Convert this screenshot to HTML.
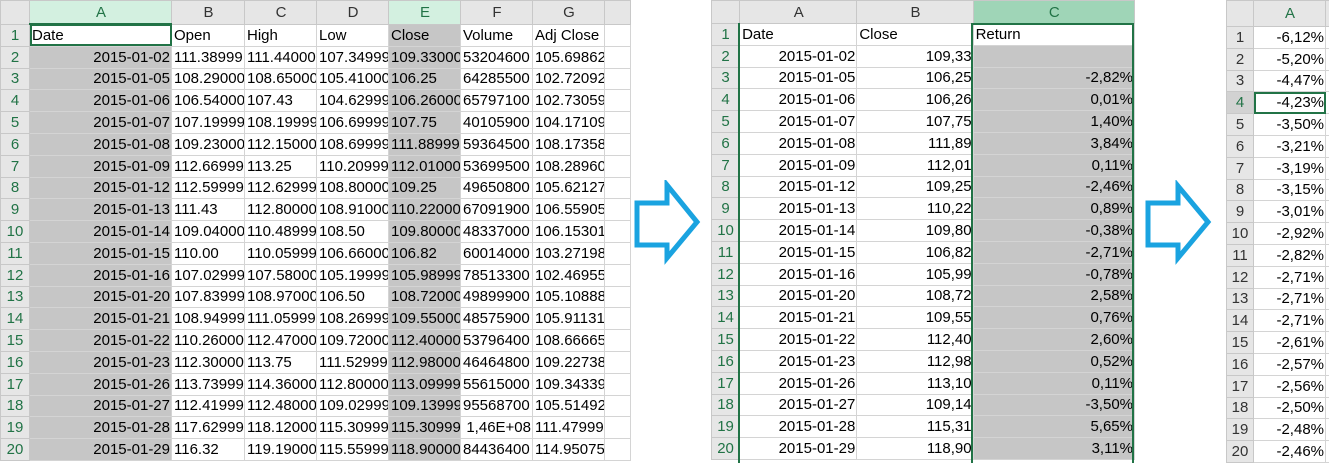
<!DOCTYPE html><html><head><style>
body{margin:0;width:1329px;height:463px;overflow:hidden;background:#fff;font-family:"Liberation Sans",sans-serif;font-size:15px;color:#000;position:relative}
.s{position:absolute;top:0;border-collapse:collapse;table-layout:fixed}
.s td{height:20.8px;border:1px solid #d4d4d4;padding:0 1px 0 2px;white-space:nowrap;overflow:hidden;line-height:19px}
.s tr.h td{height:22px;background:#e6e6e6;color:#333;text-align:center;border-color:#c8c8c8}
.s td.r{background:#e6e6e6;color:#217346;text-align:center;border-color:#c8c8c8;padding:0}
.g{background:#c6c6c6}
.R{text-align:right}
svg{position:absolute}
</style></head><body>
<table class="s" style="left:0;width:630px">
<colgroup><col style="width:29px"><col style="width:142px"><col style="width:73px"><col style="width:72px"><col style="width:72px"><col style="width:72px"><col style="width:72px"><col style="width:72px"><col style="width:26px"></colgroup>
<tr class="h"><td style="background:#e6e6e6"></td><td style="background:#d3f0e0;color:#217346;border-bottom:2px solid #217346">A</td><td>B</td><td>C</td><td>D</td><td style="background:#d3f0e0;color:#217346">E</td><td>F</td><td>G</td><td></td></tr>
<tr><td class="r">1</td><td style="outline:2px solid #217346;outline-offset:-2px">Date</td><td>Open</td><td>High</td><td>Low</td><td class="g">Close</td><td>Volume</td><td>Adj Close</td><td></td></tr>
<tr><td class="r">2</td><td class="g R">2015-01-02</td><td>111.38999</td><td>111.44000</td><td>107.34999</td><td class="g">109.33000</td><td>53204600</td><td>105.69862</td><td></td></tr>
<tr><td class="r">3</td><td class="g R">2015-01-05</td><td>108.29000</td><td>108.65000</td><td>105.41000</td><td class="g">106.25</td><td>64285500</td><td>102.72092</td><td></td></tr>
<tr><td class="r">4</td><td class="g R">2015-01-06</td><td>106.54000</td><td>107.43</td><td>104.62999</td><td class="g">106.26000</td><td>65797100</td><td>102.73059</td><td></td></tr>
<tr><td class="r">5</td><td class="g R">2015-01-07</td><td>107.19999</td><td>108.19999</td><td>106.69999</td><td class="g">107.75</td><td>40105900</td><td>104.171098</td><td></td></tr>
<tr><td class="r">6</td><td class="g R">2015-01-08</td><td>109.23000</td><td>112.15000</td><td>108.69999</td><td class="g">111.88999</td><td>59364500</td><td>108.173588</td><td></td></tr>
<tr><td class="r">7</td><td class="g R">2015-01-09</td><td>112.66999</td><td>113.25</td><td>110.20999</td><td class="g">112.01000</td><td>53699500</td><td>108.289605</td><td></td></tr>
<tr><td class="r">8</td><td class="g R">2015-01-12</td><td>112.59999</td><td>112.62999</td><td>108.80000</td><td class="g">109.25</td><td>49650800</td><td>105.621276</td><td></td></tr>
<tr><td class="r">9</td><td class="g R">2015-01-13</td><td>111.43</td><td>112.80000</td><td>108.91000</td><td class="g">110.22000</td><td>67091900</td><td>106.559059</td><td></td></tr>
<tr><td class="r">10</td><td class="g R">2015-01-14</td><td>109.04000</td><td>110.48999</td><td>108.50</td><td class="g">109.80000</td><td>48337000</td><td>106.153011</td><td></td></tr>
<tr><td class="r">11</td><td class="g R">2015-01-15</td><td>110.00</td><td>110.05999</td><td>106.66000</td><td class="g">106.82</td><td>60014000</td><td>103.271988</td><td></td></tr>
<tr><td class="r">12</td><td class="g R">2015-01-16</td><td>107.02999</td><td>107.58000</td><td>105.19999</td><td class="g">105.98999</td><td>78513300</td><td>102.469554</td><td></td></tr>
<tr><td class="r">13</td><td class="g R">2015-01-20</td><td>107.83999</td><td>108.97000</td><td>106.50</td><td class="g">108.72000</td><td>49899900</td><td>105.108881</td><td></td></tr>
<tr><td class="r">14</td><td class="g R">2015-01-21</td><td>108.94999</td><td>111.05999</td><td>108.26999</td><td class="g">109.55000</td><td>48575900</td><td>105.911314</td><td></td></tr>
<tr><td class="r">15</td><td class="g R">2015-01-22</td><td>110.26000</td><td>112.47000</td><td>109.72000</td><td class="g">112.40000</td><td>53796400</td><td>108.66665</td><td></td></tr>
<tr><td class="r">16</td><td class="g R">2015-01-23</td><td>112.30000</td><td>113.75</td><td>111.52999</td><td class="g">112.98000</td><td>46464800</td><td>109.227388</td><td></td></tr>
<tr><td class="r">17</td><td class="g R">2015-01-26</td><td>113.73999</td><td>114.36000</td><td>112.80000</td><td class="g">113.09999</td><td>55615000</td><td>109.343397</td><td></td></tr>
<tr><td class="r">18</td><td class="g R">2015-01-27</td><td>112.41999</td><td>112.48000</td><td>109.02999</td><td class="g">109.13999</td><td>95568700</td><td>105.514929</td><td></td></tr>
<tr><td class="r">19</td><td class="g R">2015-01-28</td><td>117.62999</td><td>118.12000</td><td>115.30999</td><td class="g">115.30999</td><td class="R">1,46E+08</td><td>111.479991</td><td></td></tr>
<tr><td class="r">20</td><td class="g R">2015-01-29</td><td>116.32</td><td>119.19000</td><td>115.55999</td><td class="g">118.90000</td><td>84436400</td><td>114.950754</td><td></td></tr>
</table>

<svg style="left:630px;top:180px" width="75" height="85"><polygon points="7,23 37,23 37,5 67,42 37,78 37,65 7,65" fill="none" stroke="#1aa3e0" stroke-width="5" stroke-linejoin="miter"/></svg>

<table class="s" style="left:711px;width:424px">
<colgroup><col style="width:28px"><col style="width:117px"><col style="width:116px"><col style="width:161px"></colgroup>
<tr class="h"><td></td><td>A</td><td>B</td><td style="background:#9fd5b7;color:#217346">C</td></tr>
<tr><td class="r">1</td><td>Date</td><td>Close</td><td>Return</td></tr>
<tr><td class="r">2</td><td class="R">2015-01-02</td><td class="R">109,33</td><td class="g R"></td></tr>
<tr><td class="r">3</td><td class="R">2015-01-05</td><td class="R">106,25</td><td class="g R">-2,82%</td></tr>
<tr><td class="r">4</td><td class="R">2015-01-06</td><td class="R">106,26</td><td class="g R">0,01%</td></tr>
<tr><td class="r">5</td><td class="R">2015-01-07</td><td class="R">107,75</td><td class="g R">1,40%</td></tr>
<tr><td class="r">6</td><td class="R">2015-01-08</td><td class="R">111,89</td><td class="g R">3,84%</td></tr>
<tr><td class="r">7</td><td class="R">2015-01-09</td><td class="R">112,01</td><td class="g R">0,11%</td></tr>
<tr><td class="r">8</td><td class="R">2015-01-12</td><td class="R">109,25</td><td class="g R">-2,46%</td></tr>
<tr><td class="r">9</td><td class="R">2015-01-13</td><td class="R">110,22</td><td class="g R">0,89%</td></tr>
<tr><td class="r">10</td><td class="R">2015-01-14</td><td class="R">109,80</td><td class="g R">-0,38%</td></tr>
<tr><td class="r">11</td><td class="R">2015-01-15</td><td class="R">106,82</td><td class="g R">-2,71%</td></tr>
<tr><td class="r">12</td><td class="R">2015-01-16</td><td class="R">105,99</td><td class="g R">-0,78%</td></tr>
<tr><td class="r">13</td><td class="R">2015-01-20</td><td class="R">108,72</td><td class="g R">2,58%</td></tr>
<tr><td class="r">14</td><td class="R">2015-01-21</td><td class="R">109,55</td><td class="g R">0,76%</td></tr>
<tr><td class="r">15</td><td class="R">2015-01-22</td><td class="R">112,40</td><td class="g R">2,60%</td></tr>
<tr><td class="r">16</td><td class="R">2015-01-23</td><td class="R">112,98</td><td class="g R">0,52%</td></tr>
<tr><td class="r">17</td><td class="R">2015-01-26</td><td class="R">113,10</td><td class="g R">0,11%</td></tr>
<tr><td class="r">18</td><td class="R">2015-01-27</td><td class="R">109,14</td><td class="g R">-3,50%</td></tr>
<tr><td class="r">19</td><td class="R">2015-01-28</td><td class="R">115,31</td><td class="g R">5,65%</td></tr>
<tr><td class="r">20</td><td class="R">2015-01-29</td><td class="R">118,90</td><td class="g R">3,11%</td></tr>
</table>
<div style="position:absolute;left:971px;top:23px;width:163px;height:440px;border-left:2px solid #217346;border-right:2px solid #217346;border-top:2px solid #217346;box-sizing:border-box"></div>
<div style="position:absolute;left:738px;top:23px;width:2px;height:440px;background:#217346"></div>

<svg style="left:1141px;top:180px" width="75" height="85"><polygon points="7,23 37,23 37,6 67,42 37,78 37,65 7,65" fill="none" stroke="#1aa3e0" stroke-width="5"/></svg>

<table class="s" style="left:1226px;width:103px">
<colgroup><col style="width:27px"><col style="width:72px"><col style="width:4px"></colgroup>
<tr class="h"><td style="height:25px"></td><td style="color:#217346">A</td><td></td></tr>
<tr><td class="r" style="color:#333">1</td><td class="R">-6,12%</td><td></td></tr>
<tr><td class="r" style="color:#333">2</td><td class="R">-5,20%</td><td></td></tr>
<tr><td class="r" style="color:#333">3</td><td class="R">-4,47%</td><td></td></tr>
<tr><td class="r" style="color:#217346;background:#d2d2d2">4</td><td class="R" style="outline:2px solid #217346;outline-offset:-2px">-4,23%</td><td></td></tr>
<tr><td class="r" style="color:#333">5</td><td class="R">-3,50%</td><td></td></tr>
<tr><td class="r" style="color:#333">6</td><td class="R">-3,21%</td><td></td></tr>
<tr><td class="r" style="color:#333">7</td><td class="R">-3,19%</td><td></td></tr>
<tr><td class="r" style="color:#333">8</td><td class="R">-3,15%</td><td></td></tr>
<tr><td class="r" style="color:#333">9</td><td class="R">-3,01%</td><td></td></tr>
<tr><td class="r" style="color:#333">10</td><td class="R">-2,92%</td><td></td></tr>
<tr><td class="r" style="color:#333">11</td><td class="R">-2,82%</td><td></td></tr>
<tr><td class="r" style="color:#333">12</td><td class="R">-2,71%</td><td></td></tr>
<tr><td class="r" style="color:#333">13</td><td class="R">-2,71%</td><td></td></tr>
<tr><td class="r" style="color:#333">14</td><td class="R">-2,71%</td><td></td></tr>
<tr><td class="r" style="color:#333">15</td><td class="R">-2,61%</td><td></td></tr>
<tr><td class="r" style="color:#333">16</td><td class="R">-2,57%</td><td></td></tr>
<tr><td class="r" style="color:#333">17</td><td class="R">-2,56%</td><td></td></tr>
<tr><td class="r" style="color:#333">18</td><td class="R">-2,50%</td><td></td></tr>
<tr><td class="r" style="color:#333">19</td><td class="R">-2,48%</td><td></td></tr>
<tr><td class="r" style="color:#333">20</td><td class="R">-2,46%</td><td></td></tr>
</table>
</body></html>
